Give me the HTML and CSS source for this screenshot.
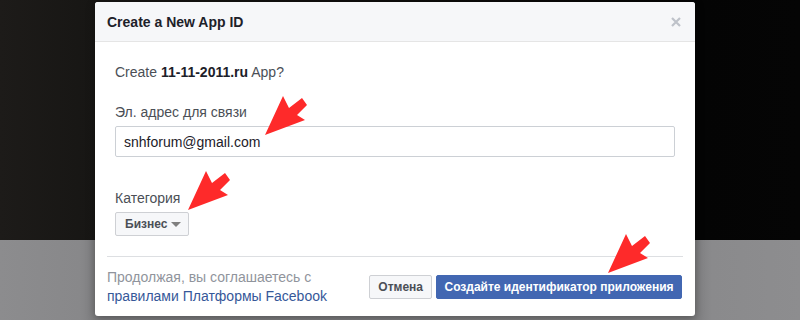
FILE: index.html
```html
<!DOCTYPE html>
<html lang="ru">
<head>
    <meta charset="UTF-8">
    <title>Create a New App ID</title>
    <link rel="stylesheet" href="styles.css">
</head>
<body>
    <div class="page">
        <div class="page-top"></div>
        <div class="page-bottom"></div>
    </div>

    <div class="dialog">
        <div class="dialog-header">
            <h2>Create a New App ID</h2>
            <svg class="close" width="10" height="10" viewBox="0 0 10 10">
                <path d="M1 1 L9 9 M9 1 L1 9" stroke="#bec2c9" stroke-width="2.2"/>
            </svg>
        </div>
        <div class="dialog-body">
            <p class="question">Create <b>11-11-2011.ru</b> App?</p>
            <div class="form-group">
                <label for="email">Эл. адрес для связи</label>
                <input type="text" id="email" value="snhforum@gmail.com">
            </div>
            <div class="form-group category">
                <label>Категория</label>
                <button class="select">Бизнес <span class="caret"></span></button>
            </div>
        </div>
        <div class="dialog-footer">
            <p class="terms">Продолжая, вы соглашаетесь с<br><a href="#">правилами Платформы Facebook</a></p>
            <div class="buttons">
                <button class="btn">Отмена</button>
                <button class="btn btn-primary">Создайте идентификатор приложения</button>
            </div>
        </div>
    </div>

    <svg class="arrows" width="800" height="320" viewBox="0 0 800 320">
        <g fill="#fe2a2a">
            <polygon transform="translate(265 135)" points="0,0 18,-39 24,-27 37,-37 42,-30 32,-20 40,-15"/>
            <polygon transform="translate(188 210)" points="0,0 18,-39 24,-27 37,-37 42,-30 32,-20 40,-15"/>
            <polygon transform="translate(608 273)" points="0,0 18,-39 24,-27 37,-37 42,-30 32,-20 40,-15"/>
        </g>
    </svg>
</body>
</html>
```

FILE: styles.css
```css
body {
    margin: 0;
    width: 800px;
    height: 320px;
    overflow: hidden;
    position: relative;
    font-family: "Liberation Sans", Arial, sans-serif;
    font-size: 14px;
    color: #4b4f56;
}

.page {
    height: 320px;
    display: flex;
    flex-direction: column;
}

.page-top {
    height: 240px;
    background: linear-gradient(90deg, #1d1b19 0%, #171614 12%, #0c0b0a 60%, #040404 88%, #050505 100%);
}

.page-bottom {
    flex: 1;
    background: linear-gradient(90deg, #8c8c8e 0%, #88888a 10%, #7e7e80 12%, #7f7f81 87%, #8a8a8c 89%, #8d8d8f 100%);
}

.dialog {
    position: absolute;
    left: 95px;
    top: 2px;
    width: 600px;
    height: 314px;
    background: #fff;
    border-radius: 3px;
    box-shadow: 0 2px 8px rgba(0, 0, 0, 0.35);
    overflow: hidden;
}

.dialog-header {
    height: 39px;
    background-color: #f6f7f9;
    border-bottom: 1px solid #e5e5e5;
    display: flex;
    align-items: center;
    justify-content: space-between;
    padding: 0 14px 0 12px;
}

.dialog-header h2 {
    margin: 0;
    font-size: 14px;
    font-weight: bold;
    color: #1d2129;
}

.close {
    margin-top: 1px;
}

.dialog-body {
    padding: 21px 20px 20px;
}

.question {
    margin: 0;
    line-height: 18px;
}

.question b {
    color: #1d2129;
}

.form-group {
    margin-top: 22px;
}

.form-group label {
    display: block;
    line-height: 18px;
    margin-bottom: 5px;
}

.form-group input {
    box-sizing: border-box;
    width: 560px;
    height: 31px;
    padding: 0 8px;
    border: 1px solid #ccd0d5;
    border-radius: 2px;
    font-family: "Liberation Sans", Arial, sans-serif;
    font-size: 14px;
    color: #1d2129;
}

.category {
    margin-top: 32px;
}

.select {
    height: 24px;
    padding: 0 7px 0 9px;
    background-color: #f6f7f9;
    border: 1px solid #ced0d4;
    border-radius: 2px;
    font-family: "Liberation Sans", Arial, sans-serif;
    font-size: 12px;
    font-weight: bold;
    color: #4b4f56;
    display: flex;
    align-items: center;
    gap: 4px;
}

.caret {
    width: 0;
    height: 0;
    border-left: 5px solid transparent;
    border-right: 5px solid transparent;
    border-top: 5px solid #7f7f7f;
}

.dialog-footer {
    margin: 0 12px;
    padding: 11px 0 9px;
    border-top: 1px solid #dddfe2;
    display: flex;
    align-items: center;
    justify-content: space-between;
}

.terms {
    margin: 0;
    line-height: 19px;
    color: #90949c;
}

.terms a {
    color: #365899;
    text-decoration: none;
}

.buttons {
    display: flex;
    gap: 4px;
    flex-shrink: 0;
    margin-right: 1px;
}

.btn {
    height: 24px;
    padding: 0 8px;
    background-color: #f6f7f9;
    border: 1px solid #ced0d4;
    border-radius: 2px;
    font-family: "Liberation Sans", Arial, sans-serif;
    font-size: 12px;
    font-weight: bold;
    color: #4b4f56;
    white-space: nowrap;
}

.btn-primary {
    width: 246px;
    padding: 0;
    background-color: #4267b2;
    border-color: #4267b2;
    color: #fff;
}

.arrows {
    position: absolute;
    left: 0;
    top: 0;
}
```
